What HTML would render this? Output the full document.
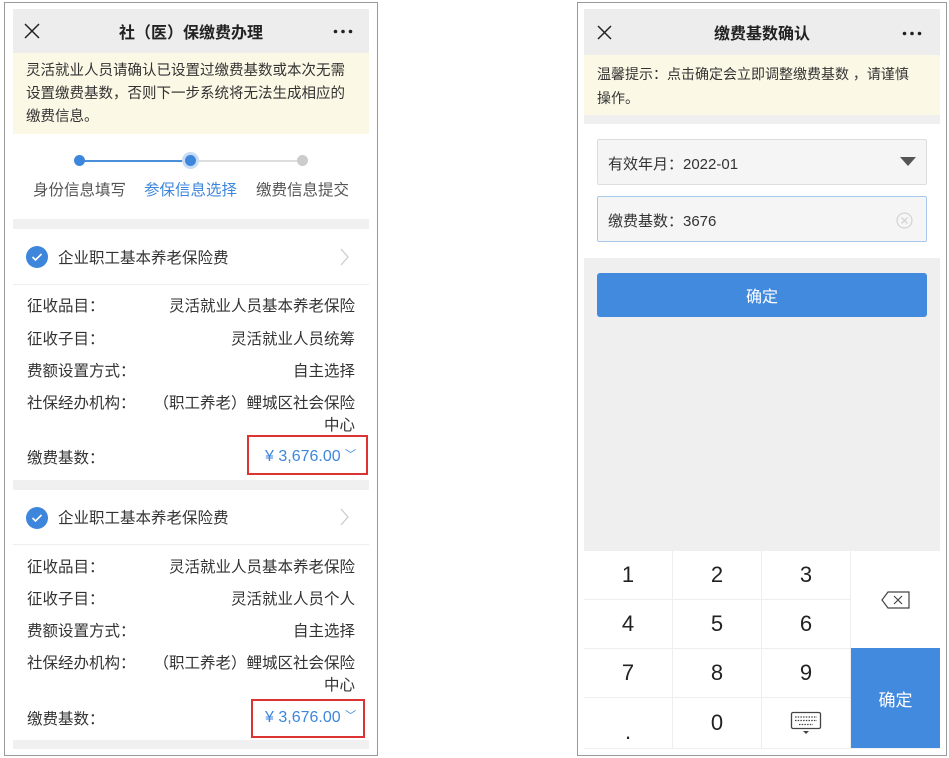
<!DOCTYPE html>
<html><head><meta charset="utf-8"><style>
*{margin:0;padding:0;box-sizing:border-box}
body{width:949px;height:758px;background:#fff;font-family:"Liberation Sans","Noto Sans CJK SC",sans-serif;color:#333;position:relative;overflow:hidden}
.abs{position:absolute}
.frame{position:absolute;border:1.5px solid #999}
.hdr{background:#ededed;font-size:16px;font-weight:bold;color:#222;display:flex;align-items:center;justify-content:center}
.note{background:#fcf8e6;color:#333}
.row{position:absolute;left:27px;width:328px;font-size:15.5px;display:flex;justify-content:space-between;color:#333}
.k{font-size:22px;color:#222;display:flex;align-items:center;justify-content:center;background:#fff;position:absolute}
</style></head><body>
<!-- LEFT -->
<div class="frame" style="left:4px;top:2px;width:374px;height:754px"></div>
<div class="abs" style="left:13px;top:9px;width:356px;height:740px;background:#fff"></div>
<div class="abs hdr" style="left:13px;top:9px;width:356px;height:44px">社（医）保缴费办理</div>
<svg class="abs" style="left:24px;top:23px" width="16" height="16"><path d="M1 1l14 14M15 1L1 15" stroke="#222" stroke-width="1.5"/></svg>
<svg class="abs" style="left:333px;top:29px" width="20" height="5"><circle cx="2.5" cy="2.5" r="1.8" fill="#222"/><circle cx="10" cy="2.5" r="1.8" fill="#222"/><circle cx="17.5" cy="2.5" r="1.8" fill="#222"/></svg>
<div class="abs note" style="left:13px;top:53px;width:356px;height:81px;padding:7px 13px;font-size:14.5px;line-height:23px">灵活就业人员请确认已设置过缴费基数或本次无需设置缴费基数，否则下一步系统将无法生成相应的缴费信息。</div>
<div class="abs" style="left:79px;top:160px;width:111px;height:1.5px;background:#4a8fd8"></div>
<div class="abs" style="left:190px;top:160px;width:112px;height:1.5px;background:#ddd"></div>
<div class="abs" style="left:74px;top:155px;width:11px;height:11px;border-radius:50%;background:#3d86dc"></div>
<div class="abs" style="left:182px;top:152px;width:17px;height:17px;border-radius:50%;background:#c8dcf5"></div>
<div class="abs" style="left:185px;top:155px;width:11px;height:11px;border-radius:50%;background:#3d86dc"></div>
<div class="abs" style="left:297px;top:155px;width:11px;height:11px;border-radius:50%;background:#ccc"></div>
<div class="abs" style="left:33px;top:178px;font-size:15.5px;color:#555">身份信息填写</div>
<div class="abs" style="left:144px;top:178px;font-size:15.5px;color:#3d86dc">参保信息选择</div>
<div class="abs" style="left:256px;top:178px;font-size:15.5px;color:#555">缴费信息提交</div>
<div class="abs" style="left:13px;top:219px;width:356px;height:10px;background:#f0f0f0"></div>
<div class="abs" style="left:13px;top:480px;width:356px;height:10px;background:#f0f0f0"></div>
<div class="abs" style="left:13px;top:740px;width:356px;height:9px;background:#f0f0f0"></div>

<div class="abs" style="left:13px;top:284px;width:356px;height:1px;background:#eee"></div>
<div class="abs" style="left:13px;top:544px;width:356px;height:1px;background:#eee"></div>

<!-- card 1 -->
<svg class="abs" style="left:26px;top:246px" width="22" height="22"><circle cx="11" cy="11" r="11" fill="#3d86dc"/><path d="M6.5 11l3 3 6-6" stroke="#fff" stroke-width="1.6" fill="none"/></svg>
<div class="abs" style="left:58px;top:246px;font-size:15.5px;color:#333">企业职工基本养老保险费</div>
<svg class="abs" style="left:340px;top:248px" width="10" height="18"><path d="M1 1l7 8-7 8" stroke="#ccc" stroke-width="1.3" fill="none"/></svg>
<div class="row" style="top:294px"><span>征收品目：</span><span>灵活就业人员基本养老保险</span></div>
<div class="row" style="top:327px"><span>征收子目：</span><span>灵活就业人员统筹</span></div>
<div class="row" style="top:359px"><span>费额设置方式：</span><span>自主选择</span></div>
<div class="row" style="top:391px"><span>社保经办机构：</span><span>（职工养老）鲤城区社会保险</span></div>
<div class="row" style="top:413px;justify-content:flex-end"><span>中心</span></div>
<div class="row" style="top:446px"><span>缴费基数：</span></div>
<div class="abs" style="left:265px;top:446px;font-size:16px;color:#3d86dc">¥ 3,676.00 <span style="font-size:11px;vertical-align:3px">﹀</span></div>
<div class="abs" style="left:247px;top:435px;width:121px;height:40px;border:2px solid #d33"></div>

<!-- card 2 -->
<svg class="abs" style="left:26px;top:507px" width="22" height="22"><circle cx="11" cy="11" r="11" fill="#3d86dc"/><path d="M6.5 11l3 3 6-6" stroke="#fff" stroke-width="1.6" fill="none"/></svg>
<div class="abs" style="left:58px;top:506px;font-size:15.5px;color:#333">企业职工基本养老保险费</div>
<svg class="abs" style="left:340px;top:508px" width="10" height="18"><path d="M1 1l7 8-7 8" stroke="#ccc" stroke-width="1.3" fill="none"/></svg>
<div class="row" style="top:555px"><span>征收品目：</span><span>灵活就业人员基本养老保险</span></div>
<div class="row" style="top:587px"><span>征收子目：</span><span>灵活就业人员个人</span></div>
<div class="row" style="top:619px"><span>费额设置方式：</span><span>自主选择</span></div>
<div class="row" style="top:651px"><span>社保经办机构：</span><span>（职工养老）鲤城区社会保险</span></div>
<div class="row" style="top:673px;justify-content:flex-end"><span>中心</span></div>
<div class="row" style="top:707px"><span>缴费基数：</span></div>
<div class="abs" style="left:265px;top:707px;font-size:16px;color:#3d86dc">¥ 3,676.00 <span style="font-size:11px;vertical-align:3px">﹀</span></div>
<div class="abs" style="left:251px;top:699px;width:114px;height:39px;border:2px solid #d33"></div>

<!-- RIGHT -->
<div class="frame" style="left:577px;top:2px;width:370px;height:754px"></div>
<div class="abs" style="left:584px;top:9px;width:356px;height:740px;background:#efefef"></div>
<div class="abs hdr" style="left:584px;top:9px;width:356px;height:46px">缴费基数确认</div>
<svg class="abs" style="left:597px;top:25px" width="15" height="15"><path d="M1 1l13 13M14 1L1 14" stroke="#222" stroke-width="1.5"/></svg>
<svg class="abs" style="left:902px;top:31px" width="20" height="5"><circle cx="2.5" cy="2.5" r="1.8" fill="#222"/><circle cx="10" cy="2.5" r="1.8" fill="#222"/><circle cx="17.5" cy="2.5" r="1.8" fill="#222"/></svg>
<div class="abs note" style="left:584px;top:55px;width:356px;height:60px;padding:7px 22px 0 13px;font-size:14px;line-height:24px">温馨提示：点击确定会立即调整缴费基数 ，请谨慎操作。</div>
<div class="abs" style="left:584px;top:124px;width:356px;height:134px;background:#fff"></div>
<div class="abs" style="left:597px;top:139px;width:330px;height:46px;background:#f5f5f5;border:1px solid #ddd;border-radius:2px;font-size:15px;padding:13px 10px;color:#333">有效年月：2022-01</div>
<svg class="abs" style="left:900px;top:157px" width="16" height="10"><path d="M0 0h16L8 9z" fill="#555"/></svg>
<div class="abs" style="left:597px;top:196px;width:330px;height:46px;background:#f5f5f5;border:1px solid #a9c8ec;border-radius:2px;font-size:15px;padding:13px 10px;color:#333">缴费基数：3676</div>
<svg class="abs" style="left:896px;top:212px" width="17" height="17"><circle cx="8.5" cy="8.5" r="7.5" stroke="#ccc" fill="none"/><path d="M5.5 5.5l6 6M11.5 5.5l-6 6" stroke="#ccc"/></svg>
<div class="abs" style="left:597px;top:273px;width:330px;height:44px;background:#428ade;border-radius:3px;color:#fff;font-size:16px;display:flex;align-items:center;justify-content:center">确定</div>

<div class="abs" style="left:584px;top:550px;width:356px;height:198px;background:#eee"></div>
<div class="k" style="left:584px;top:551px;width:88px;height:48px">1</div>
<div class="k" style="left:673px;top:551px;width:88px;height:48px">2</div>
<div class="k" style="left:762px;top:551px;width:88px;height:48px">3</div>
<div class="k" style="left:584px;top:600px;width:88px;height:48px">4</div>
<div class="k" style="left:673px;top:600px;width:88px;height:48px">5</div>
<div class="k" style="left:762px;top:600px;width:88px;height:48px">6</div>
<div class="k" style="left:584px;top:649px;width:88px;height:48px">7</div>
<div class="k" style="left:673px;top:649px;width:88px;height:48px">8</div>
<div class="k" style="left:762px;top:649px;width:88px;height:48px">9</div>
<div class="k" style="left:584px;top:698px;width:88px;height:50px;padding-top:18px">.</div>
<div class="k" style="left:673px;top:698px;width:88px;height:50px">0</div>
<div class="k" style="left:762px;top:698px;width:88px;height:50px"><svg width="32" height="24"><rect x="1.5" y="1.5" width="29" height="16" rx="1.5" stroke="#444" fill="none" stroke-width="1.3"/><path d="M5 6h22M5 9.5h22M9 13.5h14" stroke="#444" stroke-dasharray="1.5 1.2" stroke-width="1.3"/><path d="M13 20h6l-3 3z" fill="#444"/></svg></div>
<div class="k" style="left:851px;top:551px;width:89px;height:97px"><svg width="30" height="18"><path d="M7 1h21v16H7L1 9z" stroke="#444" fill="none" stroke-width="1.2"/><path d="M13 5l8 8M21 5l-8 8" stroke="#444" stroke-width="1.2"/></svg></div>
<div class="abs" style="left:851px;top:648px;width:89px;height:100px;background:#428ade;color:#fff;font-size:17px;display:flex;align-items:center;justify-content:center">确定</div>
</body></html>
